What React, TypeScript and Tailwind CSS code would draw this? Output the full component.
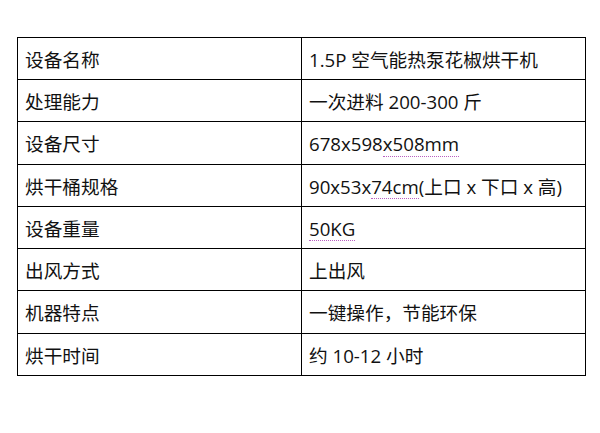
import React from "react";

type Row = {
  label: string;
  value: React.ReactNode;
  h: string;
};

// spell-check style dotted underline seen under some values
const Dotted = ({ children }: { children: React.ReactNode }) => (
  <span className="inline-block border-b border-dotted border-[#b860c0] pb-[2px] -mb-[3px]">
    {children}
  </span>
);

const rows: Row[] = [
  { label: "设备名称", value: "1.5P 空气能热泵花椒烘干机", h: "h-[42px] border-b" },
  { label: "处理能力", value: "一次进料 200-300 斤", h: "h-[42px] border-b" },
  {
    label: "设备尺寸",
    value: (
      <>
        678x598<Dotted>x508mm</Dotted>
      </>
    ),
    h: "h-[43px] border-b",
  },
  {
    label: "烘干桶规格",
    value: (
      <>
        90x53x<Dotted>74cm</Dotted>(上口 x 下口 x 高)
      </>
    ),
    h: "h-[42px] border-b",
  },
  { label: "设备重量", value: <Dotted>50KG</Dotted>, h: "h-[42px] border-b" },
  { label: "出风方式", value: "上出风", h: "h-[42px] border-b" },
  { label: "机器特点", value: "一键操作，节能环保", h: "h-[43px] border-b" },
  { label: "烘干时间", value: "约 10-12 小时", h: "h-[41px]" },
];

export default function App() {
  return (
    <div
      className="w-[600px] h-[433px] bg-white pt-[37px] pl-[17px] text-[#111] text-[18.67px]"
      style={{ fontFamily: '"Open Sans", "Noto Sans CJK SC", sans-serif' }}
    >
      {/* Spec table */}
      <div className="w-[569px] border border-black flex flex-col">
        {rows.map((r) => (
          <div key={r.label} className={`flex border-black ${r.h}`}>
            <div className="w-[284px] border-r border-black flex items-center pl-[7px] pt-[3px] leading-none">
              {r.label}
            </div>
            <div className="flex-1 flex items-center pl-[7px] pt-[3px] leading-none whitespace-pre">
              {r.value}
            </div>
          </div>
        ))}
      </div>
    </div>
  );
}
